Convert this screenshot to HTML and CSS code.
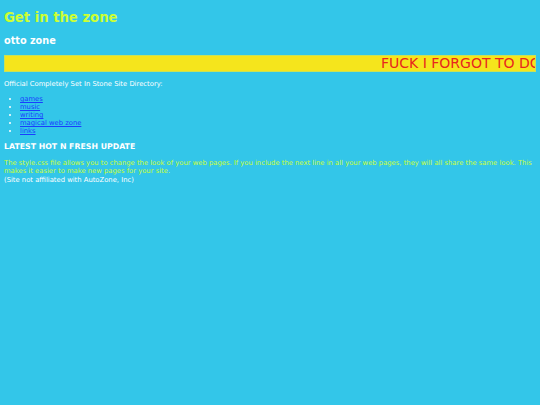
FILE: index.html
```html
<!DOCTYPE html>
<html>
<head>
<meta charset="utf-8">
<title>Get in the zone</title>
<link rel="stylesheet" href="styles.css">
</head>
<body>
<h1 class="title">Get in the zone</h1>
<h2 class="subtitle">otto zone</h2>
<div class="marquee"><span class="marquee-text">FUCK I FORGOT TO DO</span></div>
<p class="intro">Official Completely Set In Stone Site Directory:</p>
<ul class="directory">
<li><a href="#">games</a></li>
<li><a href="#">music</a></li>
<li><a href="#">writing</a></li>
<li><a href="#">magical web zone</a></li>
<li><a href="#">links</a></li>
</ul>
<h3 class="update-title">LATEST HOT N FRESH UPDATE</h3>
<p class="update">The style.css file allows you to change the look of your web pages. If you include the next line in all your web pages, they will all share the same look. This makes it easier to make new pages for your site.</p>
<p class="disclaimer">(Site not affiliated with AutoZone, Inc)</p>
</body>
</html>
```
FILE: styles.css
```css
html, body {
  margin: 0;
  background: #33c6e9;
}
body {
  padding: 4px;
  font-family: "DejaVu Sans", Verdana, sans-serif;
  font-size: 6.8px;
  line-height: 8px;
  color: #ffffff;
}
.title {
  margin: 6px 0 0;
  font-size: 13.2px;
  line-height: 15px;
  color: #ccff33;
}
.subtitle {
  margin: 10px 0 0;
  font-size: 9.7px;
  line-height: 11px;
  color: #ffffff;
}
.marquee {
  margin-top: 9px;
  height: 15px;
  background: #f5e51c;
  border: 1px solid #c6e25a;
  overflow: hidden;
  white-space: nowrap;
  padding-left: 376px;
}
.marquee-text {
  font-size: 14px;
  line-height: 15px;
  color: #e8261e;
}
.intro {
  margin: 8px 0 0;
}
.directory {
  margin: 7px 0 0;
  padding-left: 16px;
}
.directory a {
  color: #1a3dff;
}
.update-title {
  margin: 7px 0 0;
  font-size: 7.8px;
  line-height: 10px;
}
.update {
  margin: 7px 0 0;
  color: #ccff33;
}
.disclaimer {
  margin: 1px 0 0;
}
```
